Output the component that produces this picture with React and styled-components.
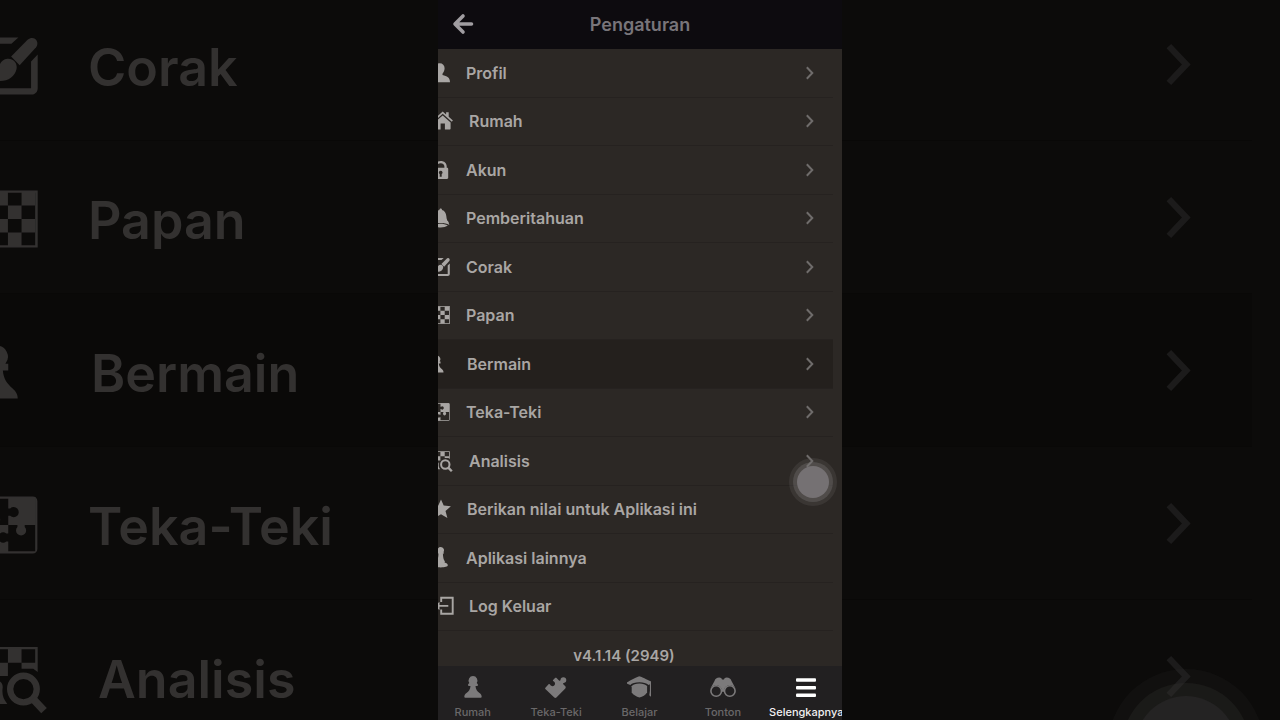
import React from "react";
import styled, { createGlobalStyle, css } from "styled-components";

const GlobalStyle = createGlobalStyle`
    * {
        box-sizing: border-box;
    }

    body {
        margin: 0;
        background-color: #0c0b0a;
        font-family: Inter, "Liberation Sans", sans-serif;
    }
`

const Stage = styled.div`
    display: grid;
    grid-template: 100vh / 100%;
    overflow: hidden;
    background-color: #0c0b0a;
`

const Backdrop = styled.div`
    grid-area: 1 / 1;
    position: relative;
    overflow: hidden;
    color: #333130;
`

const BackdropList = styled.div`
    display: flex;
    flex-direction: column;
    margin: -12px 28px 0 -25px;
`

const Phone = styled.main`
    grid-area: 1 / 1;
    justify-self: center;
    position: relative;
    display: flex;
    flex-direction: column;
    width: 100%;
    max-width: 404px;
    overflow: hidden;
    background-color: #2c2825;
    color: #a9a6a4;
`

const TopBar = styled.header`
    display: grid;
    grid-template-columns: 49px 1fr 49px;
    align-items: center;
    height: 49px;
    flex: none;
    background-color: #0d0b0f;
`

const BackButton = styled.button`
    display: flex;
    justify-content: center;
    padding: 0 0 2px;
    border: none;
    background: none;
    color: #a09da1;
    cursor: pointer;
`

const Title = styled.h1`
    margin: 0;
    color: #78757a;
    font-size: 18px;
    font-weight: 600;
    line-height: 24px;
    text-align: center;
`

const List = styled.nav`
    display: flex;
    flex-direction: column;
    flex: 1;
    min-height: 0;
    margin: 0 9px 0 -8px;
`

const slots = { normal: 36, middle: 37, wide: 39 }
const largeSlots = { normal: 113, middle: 116, wide: 123 }

const Row = styled.a`
    display: flex;
    align-items: center;
    flex: 1;
    padding-right: 17px;
    border-bottom: 1px solid #262220;
    background-color: ${props => props.$active ? "#24201d" : "transparent"};
    color: inherit;
    font-size: 16px;
    font-weight: 600;
    line-height: 20px;
    text-decoration: none;

    ${props => props.$large && css`
        flex: none;
        height: 153px;
        padding-right: 54px;
        border-bottom: 1px solid #090807;
        background-color: ${props.$active ? "#0a0908" : "transparent"};
        font-size: 52px;
        line-height: 64px;
    `}
`

const IconSlot = styled.span`
    display: flex;
    flex: none;
    width: ${props => (props.$large ? largeSlots : slots)[props.$slot]}px;
    padding-top: ${props => props.$large ? 4 : 0}px;

    svg {
        width: ${props => props.$large ? 76 : 24}px;
        height: ${props => props.$large ? 76 : 24}px;
        overflow: visible;
    }
`

const RowLabel = styled.span`
    flex: 1;
    padding-top: ${props => props.$large ? 8 : 0}px;
    white-space: nowrap;
`

const Chevron = styled.svg`
    flex: none;
    width: ${props => props.$large ? 38 : 12}px;
    height: ${props => props.$large ? 51 : 16}px;
    color: ${props => props.$large ? "#1c1b1b" : "#6f6c6b"};
`

const Version = styled.p`
    margin: 0;
    height: 35px;
    flex: none;
    padding: 15px 32px 0 0;
    font-size: 15px;
    font-weight: 600;
    line-height: 20px;
    text-align: center;
`

const TabBar = styled.nav`
    display: grid;
    grid-template-columns: repeat(5, 1fr);
    flex: none;
    height: 54px;
    padding-top: 9px;
    margin: 0 -6px 0 -7px;
    background-color: #222021;
`

const Tab = styled.a`
    display: flex;
    flex-direction: column;
    align-items: center;
    gap: 6px;
    color: ${props => props.$active ? "#ffffff" : "#7c7a7b"};
    font-size: 11px;
    font-weight: 500;
    line-height: 14px;
    text-decoration: none;
    white-space: nowrap;
`

const TabLabel = styled.span`
    color: ${props => props.$active ? "#f2f1f2" : "#6a6869"};
`

const TouchButton = styled.button`
    position: absolute;
    right: 5px;
    bottom: 214px;
    width: 48px;
    height: 48px;
    padding: 4px;
    border: none;
    border-radius: 50%;
    background-color: rgba(110, 107, 106, 0.22);
    cursor: pointer;

    ${props => props.$large && css`
        right: 16px;
        bottom: -105px;
        width: 156px;
        height: 156px;
        padding: 14px;
        background-color: rgba(60, 57, 56, 0.12);
    `}
`

const TouchRing = styled.span`
    display: block;
    height: 100%;
    padding: ${props => props.$large ? 13 : 4}px;
    border-radius: 50%;
    background-color: ${props => props.$large ? "rgba(60, 57, 56, 0.24)" : "rgba(120, 117, 116, 0.36)"};
`

const TouchDot = styled.span`
    display: block;
    height: 100%;
    border-radius: 50%;
    background-color: ${props => props.$large ? "#242323" : "#757173"};
`

function Svg({ children, width = 24, height = 24 }) {
    return (
        <svg width={width} height={height} viewBox={`0 0 ${width} ${height}`} fill="currentColor" aria-hidden="true">
            {children}
        </svg>
    )
}

function ProfileIcon() {
    return (
        <Svg>
            <path d="M9.600 2.300c3.100 0 5 2 5 5 0 2.200-.9 4.200-2.100 5.400v1.300c4.500 1.100 7.500 2.400 7.500 7.300H0c0-4.900 3-6.200 6.900-7.300v-1.300C5.700 11.500 4.800 9.500 4.800 7.300c0-3 1.900-5 4.800-5z" />
        </Svg>
    )
}

function HomeIcon() {
    return (
        <Svg>
            <path d="M12.700 2.600l3.400 2.900V3.300h2.600v4.500l4.200 3.700-1.100 1.300-9.100-8-9.100 8-1.100-1.300z" />
            <path d="M12.700 6.500l7.900 6.900v6.100c0 .7-.4 1.100-1.100 1.100h-4.600v-6h-4.300v6H5.900c-.7 0-1.100-.4-1.100-1.100v-6.100z" />
        </Svg>
    )
}

function LockIcon() {
    return (
        <Svg>
            <path fillRule="evenodd" d="M4.700 9.700V8.500C4.700 5.200 7.200 3 10.700 3s6 2.200 6 5.500v1.200h.3c.7 0 1.200.5 1.200 1.200v8.900c0 .7-.5 1.200-1.200 1.200H4.400c-.7 0-1.200-.5-1.200-1.200v-8.900c0-.7.5-1.200 1.200-1.200zm2.300 0h7.400V8.500c0-2-1.400-3.300-3.700-3.300S7 6.500 7 8.500zm3.700 3.100a1.800 1.800 0 0 0-1 3.300v2.600h2v-2.600a1.800 1.800 0 0 0-1-3.300z" />
        </Svg>
    )
}

function BellIcon() {
    return (
        <Svg>
            <path d="M10.700 2.500c.8 0 1.300.6 1.300 1.400 2.700.8 4 3 4.300 6 .3 3.300 1 5.100 2.700 7.200-2.300-1-5.300-1.500-8.500-1.500s-6 .5-8.200 1.500c1.700-2.100 2.500-3.900 2.800-7.200.3-3 1.600-5.200 4.300-6 0-.8.500-1.400 1.300-1.400z" />
            <path d="M3 15h15l1.400 3.900c-2.400-1.300-5.300-1.900-8.900-1.900s-6.300.6-8.700 1.900z" />
            <path d="M3.500 19.400c2-1.100 4.300-1.600 7-1.600s5.200.6 7.400 1.700c-1.900 1.300-4.300 1.900-7.300 1.900s-5.300-.7-7.100-2z" />
        </Svg>
    )
}

function ThemeIcon() {
    return (
        <Svg>
            <path d="M13.700 3L11.500 5H4v14h13.700V10.600l2.100-2.200V19c0 1.200-.8 2-2 2H4c-1.200 0-2-.8-2-2V5c0-1.200.8-2 2-2z" />
            <path d="M16.600 3.700c1.900-1.600 4 .4 2.700 2.400l-5.200 5.700-2.700-2.800z" />
            <path d="M10.200 9.700c2-.2 3.300 1.400 2.900 3.300-.6 2.700-3.300 4.200-6.900 3.600 1.600-1 1.200-2.200 1.400-4 .1-1.500 1.100-2.800 2.600-2.900z" />
        </Svg>
    )
}

function BoardIcon() {
    return (
        <Svg>
            <path fillRule="evenodd" d="M1.800 3h18v18h-18zM2.500 3.700v16.600H19V3.700z" />
            <path d="M6.200 3.400h4.200v4.300H6.200zM14.700 3.400H19v4.300h-4.300zM2 7.700h4.200V12H2zM10.400 7.700h4.300V12h-4.300zM6.200 12h4.200v4.300H6.200zM14.700 12H19v4.300h-4.300zM2 16.300h4.200v4.300H2zM10.400 16.300h4.300v4.300h-4.300z" />
        </Svg>
    )
}

function PlayIcon() {
    return (
        <Svg>
            <path d="M6.900 3.700a3.500 3.500 0 0 1 2.700 5.700h.9v2.100H8.800c.2 2.600 1.300 4.100 3 5.600 1.100 1 1.700 1.800 1.700 3.300H.3c0-1.500.6-2.300 1.700-3.300 1.700-1.500 2.800-3 3-5.600H3.300V9.400h.9a3.500 3.500 0 0 1 2.700-5.700z" />
        </Svg>
    )
}

function PuzzleBoardIcon() {
    return (
        <Svg>
            <path fillRule="evenodd" d="M3.300 3h14.900c.9 0 1.500.6 1.500 1.500v15c0 .9-.6 1.500-1.500 1.500H3.300c-.9 0-1.500-.6-1.500-1.500v-15C1.800 3.600 2.400 3 3.300 3zm-.8.700v16.600H19V3.700z" />
            <path d="M10.500 3.300h8.700V12h-3.500v.6a1.600 1.600 0 1 1-2.300 0V12h-2.900V9.100h.6a1.600 1.600 0 1 0 0-2.300h-.6z" />
            <path d="M2.200 12h3v-.6a1.600 1.600 0 1 1 2.300 0v.6h3v2.700h-.6a1.600 1.600 0 1 0 0 2.500h.6v3.400H2.200z" />
        </Svg>
    )
}

function AnalysisIcon() {
    return (
        <Svg>
            <path d="M1.800 2.200h18v7.900l-1.400-1h-3.700V7.200H19V2.900h-4.300v4.300h-4.300V2.900H6.200v4.300h4.200v4.200H6.200V7.200H1.800z" />
            <path d="M6.500 12.700c1.600 0 2.500 1.200 2.200 2.700-.2 2 .3 3.300 1.500 4.800H2c1.500-1.500 2.400-2.600 2.500-4.500 0-1.600.5-3 2-3z" />
            <circle cx="15.300" cy="15.500" r="4.200" fill="none" stroke="currentColor" strokeWidth="2" />
            <path d="M18.300 18.600l3.500 3.700" fill="none" stroke="currentColor" strokeWidth="2.400" />
        </Svg>
    )
}

function StarIcon() {
    return (
        <Svg>
            <path d="M11 2.500l2.700 6.100 7.200.7-5.400 4.700 1.900 6.900L11 17.200l-6.400 3.700 1.900-6.900L1.100 9.300l7.200-.7z" />
        </Svg>
    )
}

function PieceIcon() {
    return (
        <Svg>
            <path d="M10.700 1a3.300 3.300 0 0 1 2.700 5.200c.4.300.7.700.7 1.200h-1.200c.1 3.800.6 6.100 2 7.900l-.3 1.300c1.900.5 3.200 1.500 3.200 2.700 0 1.300-2.900 2.100-7.100 2.100s-7.100-.8-7.100-2.100c0-1.200 1.300-2.200 3.200-2.700l-.3-1.300c1.400-1.800 1.900-4.100 2-7.900H7.300c0-.5.3-.9.7-1.200A3.300 3.300 0 0 1 10.700 1z" />
        </Svg>
    )
}

function LogoutIcon() {
    return (
        <Svg>
            <path d="M11.200 8V3.700h11.500v16H11.200v-4.200M7 11.900h11.300" fill="none" stroke="currentColor" strokeWidth="1.900" />
            <path d="M3.500 11.900l6-4v8z" />
        </Svg>
    )
}

function BackIcon() {
    return (
        <Svg>
            <path d="M12 4L4 12l8 8M5 12h15.500" fill="none" stroke="currentColor" strokeWidth="3.600" strokeLinecap="round" strokeLinejoin="round" />
        </Svg>
    )
}

function PawnTabIcon() {
    return (
        <Svg>
            <path d="M12 1a4.500 4.500 0 0 1 3.700 7c.7.500 1.300 1.200 1.300 2.100 0 .6-.4.900-1 .9h-1.500c.2 3.400 1.800 5.300 4 7 1.500 1.100 2.200 2.200 2.200 3.800 0 .6-.4.900-1 .9H4.300c-.6 0-1-.3-1-.9 0-1.600.7-2.700 2.200-3.800 2.200-1.700 3.800-3.600 4-7H8c-.6 0-1-.3-1-.9 0-.9.600-1.600 1.300-2.100A4.500 4.500 0 0 1 12 1z" />
        </Svg>
    )
}

function PuzzleTabIcon() {
    return (
        <Svg>
            <path d="M1.600 12.400l3.200-3.300c.5-.4 1-.1 1.200.4a2.600 2.600 0 1 0 3.500-3.300c-.6-.2-.8-.8-.4-1.200l1.700-1.800c.6-.6 1.400-.6 2 0l2.200 2.200c.6.500 1.300.2 1.500-.5a2.900 2.900 0 1 1 3.300 3c-.8.200-1 .9-.5 1.400l2 2c.6.600.6 1.500 0 2.100l-8.900 9.200c-.6.600-1.500.6-2.100 0l-8.700-8.300c-.6-.6-.6-1.300 0-1.900z" />
        </Svg>
    )
}

function LearnTabIcon() {
    return (
        <Svg>
            <path d="M12.300 1.200c.6 0 9.300 3.900 11 4.900.7.400.9.700.9 1.500v8.200l.5 6.300c-1-.4-1.800-1-2.400-1.800l.6-4.500V9.200l-1.300.8c-2.200-1.800-5.300-2.800-9-2.800-4.500 0-7.600 1-9.300 2.800L.2 8.700c-.6-.4-.5-1 0-1.400C2 6 11.600 1.200 12.300 1.200z" />
            <path d="M4.700 11.300c1.300-1.700 4-2.700 7.800-2.700 3.400 0 6 .9 7.600 2.400v6.500c-1.600 2.400-4.500 4.300-7.600 5-3.200-.8-6.200-2.600-7.800-5z" />
        </Svg>
    )
}

function WatchTabIcon() {
    return (
        <Svg width={28}>
            <circle cx="7.200" cy="16" r="5.300" fill="none" stroke="currentColor" strokeWidth="1.600" />
            <circle cx="20.800" cy="16" r="5.300" fill="none" stroke="currentColor" strokeWidth="1.600" />
            <path d="M1.200 14L5.500 6c.6-2.400 2.300-3.600 4.800-3.600 1.500 0 2.500.8 2.700 2.200h2c.2-1.400 1.200-2.200 2.700-2.200 2.500 0 4.200 1.200 4.800 3.600l4.300 8c-1.300-2.500-3.500-3.800-6-3.800-2.900 0-5.100 1.800-5.900 4.600h-1.800C12.300 12 10.100 10.200 7.200 10.200c-2.500 0-4.700 1.300-6 3.800z" />
            <circle cx="14" cy="15.500" r="1.400" />
        </Svg>
    )
}

function MenuTabIcon() {
    return (
        <Svg>
            <rect x="2" y="3.300" width="20" height="3.400" rx="1" />
            <rect x="2" y="11" width="20" height="3.400" rx="1" />
            <rect x="2" y="18.600" width="20" height="3.400" rx="1" />
        </Svg>
    )
}

const items = [
    { label: "Profil", icon: ProfileIcon, slot: "normal", arrow: true },
    { label: "Rumah", icon: HomeIcon, slot: "wide", arrow: true },
    { label: "Akun", icon: LockIcon, slot: "normal", arrow: true },
    { label: "Pemberitahuan", icon: BellIcon, slot: "normal", arrow: true },
    { label: "Corak", icon: ThemeIcon, slot: "normal", arrow: true },
    { label: "Papan", icon: BoardIcon, slot: "normal", arrow: true },
    { label: "Bermain", icon: PlayIcon, slot: "middle", arrow: true, active: true },
    { label: "Teka-Teki", icon: PuzzleBoardIcon, slot: "normal", arrow: true },
    { label: "Analisis", icon: AnalysisIcon, slot: "wide", arrow: true },
    { label: "Berikan nilai untuk Aplikasi ini", icon: StarIcon, slot: "middle" },
    { label: "Aplikasi lainnya", icon: PieceIcon, slot: "normal" },
    { label: "Log Keluar", icon: LogoutIcon, slot: "wide" },
]

const tabs = [
    { label: "Rumah", icon: PawnTabIcon },
    { label: "Teka-Teki", icon: PuzzleTabIcon },
    { label: "Belajar", icon: LearnTabIcon },
    { label: "Tonton", icon: WatchTabIcon },
    { label: "Selengkapnya", icon: MenuTabIcon, active: true },
]

function MenuRow({ item, large }) {
    const Icon = item.icon
    return (
        <Row href="#" $large={large} $active={item.active} tabIndex={large ? -1 : 0}>
            <IconSlot $large={large} $slot={item.slot}><Icon /></IconSlot>
            <RowLabel $large={large}>{item.label}</RowLabel>
            {item.arrow && (
                <Chevron $large={large} viewBox="0 0 12 16" fill="none" aria-hidden="true">
                    <path d="M2.800 2.200l5.500 5.800-5.500 5.800" stroke="currentColor" strokeWidth="2" />
                </Chevron>
            )}
        </Row>
    )
}

function AssistiveTouch({ large }) {
    return (
        <TouchButton $large={large} aria-label="AssistiveTouch" tabIndex={large ? -1 : 0}>
            <TouchRing $large={large}>
                <TouchDot $large={large} />
            </TouchRing>
        </TouchButton>
    )
}

export default function App() {
    return (
        <>
            <GlobalStyle />
            <Stage>
                {/* enlarged, darkened copy of the rows behind the phone */}
                <Backdrop aria-hidden="true">
                    <BackdropList>
                        {items.slice(4, 9).map(item => <MenuRow key={item.label} item={item} large />)}
                    </BackdropList>
                    <AssistiveTouch large />
                </Backdrop>
                <Phone>
                    <TopBar>
                        <BackButton aria-label="Kembali"><BackIcon /></BackButton>
                        <Title>Pengaturan</Title>
                    </TopBar>
                    <List>
                        {items.map(item => <MenuRow key={item.label} item={item} />)}
                    </List>
                    <Version>v4.1.14 (2949)</Version>
                    <TabBar>
                        {tabs.map(tab => (
                            <Tab key={tab.label} href="#" $active={tab.active}>
                                <tab.icon />
                                <TabLabel $active={tab.active}>{tab.label}</TabLabel>
                            </Tab>
                        ))}
                    </TabBar>
                    <AssistiveTouch />
                </Phone>
            </Stage>
        </>
    )
}
